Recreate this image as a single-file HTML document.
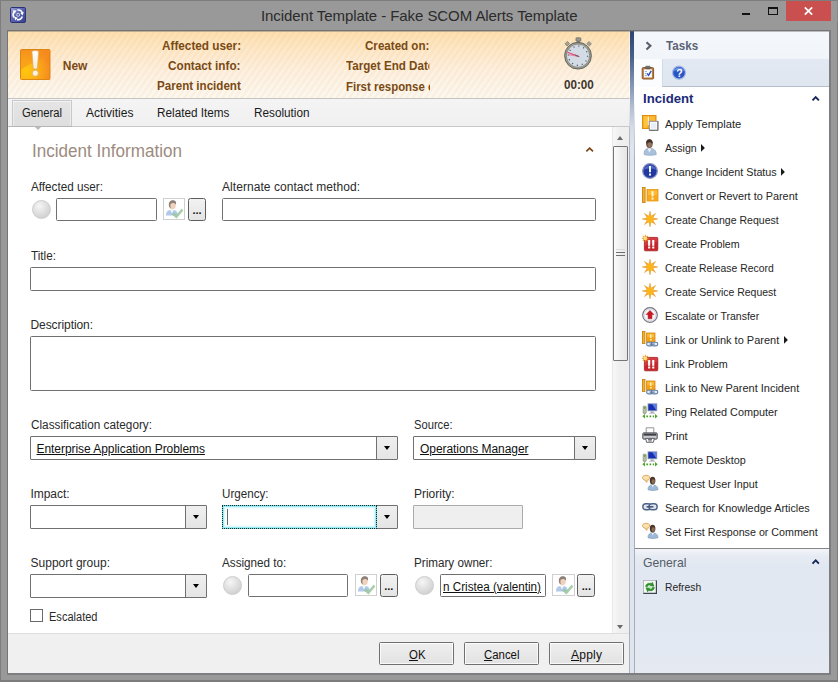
<!DOCTYPE html>
<html><head><meta charset="utf-8"><title>Incident Template - Fake SCOM Alerts Template</title>
<style>
html,body{margin:0;padding:0}
body{width:838px;height:682px;overflow:hidden;position:relative;background:#999;font-family:"Liberation Sans",sans-serif;font-size:12px;color:#1a1a1a}
.a{position:absolute;box-sizing:border-box}
.t{position:absolute;white-space:pre;display:block;transform-origin:0 0}
.clipR{overflow:hidden;width:83.4px}
.inp{position:absolute;box-sizing:border-box;background:#fff;border:1px solid #707070;border-radius:1.5px}
.btn{position:absolute;box-sizing:border-box;border:1px solid #9a9a9a;border-radius:2px;background:linear-gradient(#f6f6f6,#e6e6e6)}
.cb{position:absolute;box-sizing:border-box;background:#fff;border:1px solid #707070;border-radius:1px}
.cbb{position:absolute;box-sizing:border-box;top:0;right:0;bottom:0;width:21px;border-left:1px solid #707070;background:linear-gradient(#efefef,#e5e5e5)}
.cbb:after{content:"";position:absolute;left:7px;top:9px;border-left:3.5px solid transparent;border-right:3.5px solid transparent;border-top:4px solid #000}
.orb{position:absolute;width:19px;height:19px;border-radius:50%;box-sizing:border-box;border:1px solid #cdcdcd;background:radial-gradient(circle at 38% 30%,#f6f6f6 0,#e2e2e2 40%,#d2d2d2 75%,#c8c8c8 100%)}
.ub{background:#fff !important;border-color:#d0d0d0 !important;border-radius:0 !important}
.db{border-color:#5e5e5e !important;border-radius:2.5px !important;background:linear-gradient(#f2f2f2,#e4e4e4) !important}
svg{position:absolute;overflow:visible}
</style></head>
<body>
<!-- window frame -->
<div class="a" style="left:0;top:0;width:838px;height:682px;border:1px solid #7d7d7d;border-bottom-color:#8a8a8a;border-right-color:#8a8a8a"></div>
<div class="a" style="left:7px;top:30px;width:824px;height:645px;border:1px solid #747474"></div>
<!-- title bar icon -->
<svg style="left:10px;top:7px" width="16" height="16" viewBox="0 0 16 16"><defs><linearGradient id="ag" x1="0" y1="0" x2="1" y2="1"><stop offset="0" stop-color="#9aa3d6"/><stop offset=".5" stop-color="#5660ae"/><stop offset="1" stop-color="#363f90"/></linearGradient></defs><rect x=".5" y=".5" width="15" height="15" rx="1.2" fill="url(#ag)" stroke="#2a3176"/><path d="M4.2 10.6 A4.6 4.6 0 0 1 4.6 4.6" stroke="#fff" stroke-width="1.6" fill="none"/><path d="M2.6 3.2 L6.6 3.4 L4.6 6.6Z" fill="#fff"/><path d="M7.4 3.1 A4.6 4.6 0 0 1 12.4 6" stroke="#fff" stroke-width="1.5" fill="none"/><path d="M13.8 5 L12.6 8.6 L10.4 6Z" fill="#fff"/><path d="M12.3 9.6 A4.6 4.6 0 0 1 7 12.6" stroke="#fff" stroke-width="1.6" fill="none"/><path d="M4 9.6 L7.8 10.8 L5.4 13.6Z" fill="#fff"/><circle cx="8.2" cy="7.8" r="1.5" fill="none" stroke="#dfe3f6" stroke-width=".9"/></svg>
<!-- caption buttons -->
<div class="a" style="left:742px;top:13px;width:8px;height:2px;background:#111"></div>
<div class="a" style="left:768px;top:7px;width:10px;height:8px;border:1px solid #111;border-top-width:2px"></div>
<div class="a" style="left:786px;top:1px;width:45px;height:20px;background:#ca4f4f"></div>
<svg style="left:804px;top:7px" width="9" height="8" viewBox="0 0 9 8"><path d="M0.8 0.3 L8.2 7.7 M8.2 0.3 L0.8 7.7" stroke="#fff" stroke-width="1.7" fill="none"/></svg>

<!-- LEFT PANE -->
<div class="a" id="hdr" style="left:8px;top:31px;width:622px;height:67px;background:repeating-linear-gradient(125deg,rgba(232,150,60,.075) 0,rgba(232,150,60,.075) 1.5px,rgba(232,150,60,0) 2.7px,rgba(232,150,60,0) 4px,rgba(232,150,60,.075) 5.2px),linear-gradient(#fde0b0 0,#fde6c2 20%,#fdeedb 50%,#fcf4e8 75%,#fcf8f0 100%)"></div>
<!-- warning icon -->
<svg style="left:20px;top:49px" width="31" height="31" viewBox="0 0 31 31"><defs><radialGradient id="wg" cx="0.18" cy="0.72" r="0.95"><stop offset="0" stop-color="#ffc70d"/><stop offset=".35" stop-color="#fdb515"/><stop offset=".7" stop-color="#f8981c"/><stop offset="1" stop-color="#f4801f"/></radialGradient><linearGradient id="we" x1="0" y1="0" x2="0" y2="1"><stop offset="0" stop-color="#ffffff"/><stop offset="1" stop-color="#f6ead2"/></linearGradient></defs><rect x=".5" y=".5" width="29.5" height="30" rx="1" fill="url(#wg)" stroke="#dd8614"/><path d="M1 1 H29.5 V8 C20 10 8 15 1 21Z" fill="#f6901e" opacity=".55"/><path d="M11.9 2.2 Q15.3 0.9 18.7 2.2 L17.4 19.6 Q15.3 20.5 13.2 19.6Z" fill="url(#we)" stroke="#e0a95a" stroke-width=".7"/><circle cx="15.3" cy="24.2" r="3" fill="#fbf3e2" stroke="#e0a95a" stroke-width=".7"/></svg>
<!-- stopwatch -->
<svg style="left:562px;top:36px" width="32" height="36" viewBox="0 0 32 36"><rect x="14" y="1.8" width="4.8" height="3.4" rx=".6" fill="#9a9a92" stroke="#66665e" stroke-width=".7"/><rect x="15.2" y="4.8" width="2.4" height="2.4" fill="#7a7a72"/><rect x="3.6" y="6.2" width="3.4" height="3" transform="rotate(-42 5.3 7.7)" fill="#a5a59b" stroke="#6e6e66" stroke-width=".6"/><rect x="25.4" y="6.2" width="3.4" height="3" transform="rotate(42 27.1 7.7)" fill="#a5a59b" stroke="#6e6e66" stroke-width=".6"/><circle cx="16" cy="19.7" r="13.4" fill="#9c9c90" stroke="#5e5e58" stroke-width=".9"/><circle cx="16" cy="19.7" r="11.6" fill="#d3dce5" stroke="#74746c" stroke-width=".7"/><circle cx="16" cy="19.7" r="9.6" fill="none" stroke="#4e5660" stroke-width="1.3" stroke-dasharray="1.1 3.927"/><path d="M16.4 20.4 L5.4 16.2" stroke="#e04a72" stroke-width="1.2"/><path d="M16.4 20.4 L6.2 18.6" stroke="#e87a98" stroke-width="1"/><path d="M13 19 L17.4 20.8" stroke="#6a5860" stroke-width="1"/></svg>

<!-- tab strip -->
<div class="a" style="left:8px;top:98px;width:622px;height:29px;background:linear-gradient(#f4f4f4,#f0f0f0);border-top:1px solid #c4c4c4;border-bottom:1px solid #c8c8c8"></div>
<div class="a" style="left:12px;top:100px;width:60px;height:27px;background:linear-gradient(#e5e5e5,#dedede);border:1px solid #c8c8c8;border-bottom-color:#b4b4b4;box-shadow:inset 0 1px 0 rgba(255,255,255,.55),inset 1px 0 0 rgba(255,255,255,.4),inset -1px 0 0 rgba(255,255,255,.4)"></div>
<div class="a" style="left:9px;top:126px;width:63px;height:1px;background:#b6b6b6"></div>

<!-- form area -->
<div class="a" style="left:8px;top:127px;width:604px;height:508px;background:#fff"></div>
<div class="a" style="left:35px;top:127px;width:0;height:0;border-left:3.5px solid transparent;border-right:3.5px solid transparent;border-top:3.5px solid #b8b8b8"></div>
<!-- expander chevron -->
<svg style="left:584px;top:146px" width="10" height="7" viewBox="0 0 10 7"><path d="M2.33 5.38 L5.65 2.06 L8.97 5.38" stroke="#7a4210" stroke-width="1.6" fill="none"/></svg>

<!-- row 1 -->
<div class="orb" style="left:32px;top:200px"></div>
<div class="inp" style="left:56px;top:198px;width:101px;height:23px"></div>
<div class="btn ub" style="left:163px;top:198px;width:22px;height:22px"></div>
<div class="btn db" style="left:188px;top:198px;width:18px;height:23px"></div>
<div class="inp" style="left:222px;top:198px;width:374px;height:23px"></div>
<!-- title -->
<div class="inp" style="left:30px;top:267px;width:566px;height:24px"></div>
<!-- description -->
<div class="inp" style="left:30px;top:336px;width:566px;height:55px"></div>
<!-- class / source -->
<div class="cb" style="left:30px;top:436px;width:368px;height:24px"><div class="cbb"></div></div>
<div class="cb" style="left:413px;top:436px;width:183px;height:24px"><div class="cbb"></div></div>
<!-- impact / urgency / priority -->
<div class="cb" style="left:30px;top:505px;width:177px;height:24px"><div class="cbb"></div></div>
<div class="cb" style="left:222px;top:505px;width:176px;height:24px"><div class="cbb"></div></div>
<div class="a" style="left:222px;top:505px;width:155px;height:24px;border:1px solid #6ccfdc;box-shadow:inset 0 0 0 1px #9aedf5, inset 0 0 2px 2px #cdf6fa;background:#fff"></div>
<div class="a" style="left:222px;top:505px;width:155px;height:24px;border:1px dotted #132c2c"></div>
<div class="a" style="left:227px;top:509px;width:1.4px;height:16px;background:#666"></div>
<div class="a" style="left:413px;top:505px;width:110px;height:24px;border:1px solid #ababab;background:#efefef;border-radius:1px"></div>
<!-- support / assigned / owner -->
<div class="cb" style="left:30px;top:574px;width:177px;height:24px"><div class="cbb"></div></div>
<div class="orb" style="left:223px;top:576px"></div>
<div class="inp" style="left:248px;top:574px;width:100px;height:23px"></div>
<div class="btn ub" style="left:355px;top:574px;width:22px;height:22px"></div>
<div class="btn db" style="left:380px;top:574px;width:18px;height:23px"></div>
<div class="orb" style="left:415px;top:576px"></div>
<div class="inp" style="left:440px;top:574px;width:106px;height:23px"></div>
<div class="btn ub" style="left:552px;top:574px;width:23px;height:22px"></div>
<div class="btn db" style="left:577px;top:574px;width:18px;height:23px"></div>
<!-- checkbox -->
<div class="inp" style="left:30px;top:609px;width:13px;height:13px;border-color:#6a6a6a;border-radius:0"></div>

<!-- scrollbar -->
<div class="a" style="left:612px;top:127px;width:17px;height:507px;background:linear-gradient(90deg,#f7f7f7,#efefef 40%,#eeeeee);border-left:1px solid #e8e8e8"></div>
<div class="a" style="left:613px;top:146px;width:15px;height:215px;background:linear-gradient(90deg,#fbfbfb,#ededed 60%,#e6e6e6);border:1px solid #767676;border-radius:1px"></div>
<div class="a" style="left:616px;top:249px;width:9px;height:1px;background:#d8d8d8"></div>
<div class="a" style="left:616px;top:252px;width:9px;height:1px;background:#6e6e6e"></div>
<div class="a" style="left:616px;top:255px;width:9px;height:1px;background:#6e6e6e"></div>
<div class="a" style="left:617px;top:136px;width:0;height:0;border-left:3.5px solid transparent;border-right:3.5px solid transparent;border-bottom:4px solid #6a6a6a"></div>
<div class="a" style="left:617px;top:625px;width:0;height:0;border-left:3.5px solid transparent;border-right:3.5px solid transparent;border-top:4px solid #6a6a6a"></div>

<!-- bottom bar -->
<div class="a" style="left:8px;top:633px;width:622px;height:41px;background:#f0f0f0;border-top:1px solid #dedede"></div>
<div class="btn" style="left:379px;top:642px;width:75px;height:23px;border-color:#707070;border-radius:1.5px;background:linear-gradient(#efefef,#e2e2e2);box-shadow:inset 0 0 0 1px rgba(255,255,255,.75)"></div>
<div class="btn" style="left:464px;top:642px;width:75px;height:23px;border-color:#707070;border-radius:1.5px;background:linear-gradient(#efefef,#e2e2e2);box-shadow:inset 0 0 0 1px rgba(255,255,255,.75)"></div>
<div class="btn" style="left:549px;top:642px;width:75px;height:23px;border-color:#707070;border-radius:1.5px;background:linear-gradient(#efefef,#e2e2e2);box-shadow:inset 0 0 0 1px rgba(255,255,255,.75)"></div>

<!-- splitter -->
<div class="a" style="left:629px;top:31px;width:6px;height:643px;background:linear-gradient(rgba(255,255,255,.5) 0,rgba(255,255,255,.5) 10%,#aab1bc 20%,#aab1bc 100%)"></div>
<div class="a" style="left:630px;top:31px;width:4px;height:643px;background:linear-gradient(#2b4474 0,#46608c 4%,#7d90b0 8%,#b4bfd1 12%,#d6dce7 15%,#dfe5ee 18%,#dfe5ee 100%)"></div>
<!-- RIGHT PANE -->
<div class="a" style="left:634px;top:31px;width:196px;height:643px;background:#fff"></div>
<div class="a" style="left:634px;top:31px;width:196px;height:28px;background:linear-gradient(#f4f7fb,#f1f4f9)"></div>
<div class="a" style="left:634px;top:59px;width:28px;height:28px;background:#fbfcfe"></div>
<div class="a" style="left:662px;top:59px;width:168px;height:28px;background:linear-gradient(#e3e9f2,#e0e6ef);border-bottom:1px solid #b6beca;border-left:1px solid #d5dbe5"></div>
<svg style="left:645px;top:40px" width="8" height="11" viewBox="0 0 8 11"><path d="M1.5 2.2 L5.4 5.8 L1.5 9.4" stroke="#585d6a" stroke-width="2.1" fill="none"/></svg>
<!-- section chevrons -->
<svg style="left:810px;top:95px" width="10" height="7" viewBox="0 0 10 7"><path d="M2.5 5.4 L5.7 2.2 L8.9 5.4" stroke="#17265a" stroke-width="1.9" fill="none"/></svg>
<!-- general section -->
<div class="a" style="left:634px;top:548px;width:196px;height:126px;background:linear-gradient(#f3f5f9 0,#e6ebf3 6%,#e2e8f1 14%,#e2e8f1 60%,#e4e9f2 100%);border-top:1px solid #858585"></div>
<svg style="left:810px;top:558px" width="10" height="7" viewBox="0 0 10 7"><path d="M2.5 5.6 L5.7 2.4 L8.9 5.6" stroke="#17265a" stroke-width="1.9" fill="none"/></svg>

<div class="a" style="left:634px;top:31px;width:1px;height:643px;background:linear-gradient(rgba(170,177,188,0) 0,rgba(170,177,188,0) 10%,#a6aeba 20%,#a6aeba 100%)"></div>
<div class="a" style="left:8px;top:31px;width:821px;height:1px;background:rgba(105,105,105,.42)"></div>
<!-- frame overlay -->
<div class="a" style="left:829px;top:22px;width:9px;height:660px;background:#999;border-left:2px solid #7c7e81;border-right:1px solid #7f7f7f"></div>
<div class="a" style="left:0;top:673px;width:838px;height:9px;background:#999;border-top:2px solid #7c7e81;border-bottom:2px solid #7c7c7c;border-left:1px solid #7d7d7d;border-right:1px solid #7f7f7f"></div>
<div class="a" style="left:1px;top:673px;width:6px;height:2px;background:#999"></div>
<div class="a" style="left:831px;top:22px;width:6px;height:9px;background:#999"></div>
<div class="a" style="left:829px;top:22px;width:2px;height:8px;background:#999"></div>
<div class="a" style="left:831px;top:673px;width:6px;height:2px;background:#999"></div>
<svg style="left:642px;top:115px" width="16" height="16" viewBox="0 0 16 16"><rect x="0.5" y="0.5" width="13.5" height="13" fill="#f7a61c" stroke="#e0900c"/><rect x="1.6" y="1.4" width="3.8" height="11.2" fill="#fdc33e"/><rect x="7.4" y="1.4" width="5.6" height="5" fill="#fbb836"/><path d="M6.3 1.6 V10" stroke="#fff4d8" stroke-width="1.3"/><rect x="7.3" y="6.3" width="8.6" height="9" fill="#fafbfd" stroke="#8e9096"/><path d="M7.3 15.3 H15.9 V6.3" stroke="#6e7076" fill="none"/><rect x="9" y="8" width="5.2" height="5.4" fill="#e8eef8"/></svg>
<svg style="left:642px;top:139px" width="16" height="16" viewBox="0 0 16 16"><path d="M2.2 15.6 C1.8 11.6 3.6 9.4 7.4 9 C11.4 9.4 14.6 11.6 14.2 15.6 C10.8 16.6 5.6 16.6 2.2 15.6Z" fill="#a9c2da" stroke="#7e9ab8" stroke-width=".6"/><path d="M5.6 9.4 L7.4 13.4 L9.4 9.4Z" fill="#eef3f9"/><ellipse cx="7.4" cy="4.6" rx="3.3" ry="4.5" fill="#6e5444"/><path d="M4.1 5.2 C3.6 -0.6 11 -0.6 10.7 5 C9.6 2.8 5.4 2.8 4.1 5.2Z" fill="#3e3029"/><ellipse cx="7.8" cy="6.2" rx="2.1" ry="2.7" fill="#94745e"/></svg>
<svg style="left:642px;top:163px" width="16" height="16" viewBox="0 0 16 16"><circle cx="8" cy="8" r="7.3" fill="#2138a0" stroke="#8894c0" stroke-width="1.3"/><path d="M2 6.8 A6.2 6.2 0 0 1 14 6.8 C10 4.8 6 4.8 2 6.8Z" fill="#5c78d6" opacity=".75"/><path d="M8 3 V9.2" stroke="#fff" stroke-width="1.9"/><rect x="7.05" y="10.5" width="1.9" height="2.1" fill="#fff"/></svg>
<svg style="left:642px;top:187px" width="16" height="16" viewBox="0 0 16 16"><rect x="0.5" y="0.5" width="2.6" height="15" fill="#f7b02a" stroke="#c98412" stroke-width=".9"/><rect x="5" y="2.5" width="11" height="11.5" fill="#f7a81c" stroke="#e59a14" stroke-width=".8"/><rect x="6" y="3.5" width="9" height="4.5" fill="#fbbf3a" opacity=".8"/><path d="M10.5 4.2 V9.4" stroke="#fff6e0" stroke-width="2"/><rect x="9.5" y="10.6" width="2" height="2" fill="#fff6e0"/></svg>
<svg style="left:642px;top:211px" width="16" height="16" viewBox="0 0 16 16"><path d="M8.00 0.20 L9.03 5.51 L13.52 2.48 L10.49 6.97 L15.80 8.00 L10.49 9.03 L13.52 13.52 L9.03 10.49 L8.00 15.80 L6.97 10.49 L2.48 13.52 L5.51 9.03 L0.20 8.00 L5.51 6.97 L2.48 2.48 L6.97 5.51Z" fill="#f0a020" stroke="#e2901a" stroke-width=".5" stroke-linejoin="round"/><circle cx="8" cy="8" r="3.7" fill="#fbb41c"/></svg>
<svg style="left:642px;top:235px" width="16" height="16" viewBox="0 0 16 16"><rect x="2.4" y="2.4" width="13.4" height="13.4" rx="1" fill="#c4262c" stroke="#a81e26" stroke-width=".8"/><path d="M3 3 H15.2 V7 C11 7.6 6 9 3 11Z" fill="#dc4a4e" opacity=".6"/><rect x="6.1" y="5" width="2.1" height="5.8" fill="#fff"/><rect x="6.1" y="11.5" width="2.1" height="2" fill="#fff"/><rect x="10.2" y="5" width="2.1" height="5.8" fill="#fff"/><rect x="10.2" y="11.5" width="2.1" height="2" fill="#fff"/><path d="M3.40 -0.20 L3.90 2.20 L5.95 0.85 L4.60 2.90 L7.00 3.40 L4.60 3.90 L5.95 5.95 L3.90 4.60 L3.40 7.00 L2.90 4.60 L0.85 5.95 L2.20 3.90 L-0.20 3.40 L2.20 2.90 L0.85 0.85 L2.90 2.20Z" fill="#f6b23a" stroke="#e2901a" stroke-width=".5" stroke-linejoin="round"/><circle cx="3.4" cy="3.4" r="1.6" fill="#fde27a"/></svg>
<svg style="left:642px;top:259px" width="16" height="16" viewBox="0 0 16 16"><path d="M8.00 0.20 L9.03 5.51 L13.52 2.48 L10.49 6.97 L15.80 8.00 L10.49 9.03 L13.52 13.52 L9.03 10.49 L8.00 15.80 L6.97 10.49 L2.48 13.52 L5.51 9.03 L0.20 8.00 L5.51 6.97 L2.48 2.48 L6.97 5.51Z" fill="#f0a020" stroke="#e2901a" stroke-width=".5" stroke-linejoin="round"/><circle cx="8" cy="8" r="3.7" fill="#fbb41c"/></svg>
<svg style="left:642px;top:283px" width="16" height="16" viewBox="0 0 16 16"><path d="M8.00 0.20 L9.03 5.51 L13.52 2.48 L10.49 6.97 L15.80 8.00 L10.49 9.03 L13.52 13.52 L9.03 10.49 L8.00 15.80 L6.97 10.49 L2.48 13.52 L5.51 9.03 L0.20 8.00 L5.51 6.97 L2.48 2.48 L6.97 5.51Z" fill="#f0a020" stroke="#e2901a" stroke-width=".5" stroke-linejoin="round"/><circle cx="8" cy="8" r="3.7" fill="#fbb41c"/></svg>
<svg style="left:642px;top:307px" width="16" height="16" viewBox="0 0 16 16"><circle cx="8" cy="8" r="7.3" fill="#f6f6f8" stroke="#74747e" stroke-width="1.2"/><circle cx="8" cy="8" r="5.9" fill="none" stroke="#d9dbe4" stroke-width="1"/><path d="M8 3.4 L11.9 7.6 H9.9 V11.8 H6.1 V7.6 H4.1Z" fill="#cc1822" stroke="#a3121a" stroke-width=".5"/></svg>
<svg style="left:642px;top:331px" width="16" height="16" viewBox="0 0 16 16"><rect x="0.5" y="0.5" width="2.4" height="12" fill="#f7b02a" stroke="#c98412" stroke-width=".9"/><rect x="4.5" y="2" width="8.5" height="9" fill="#f2a21a" stroke="#d48c12" stroke-width=".8"/><rect x="5.3" y="2.8" width="7" height="3.4" fill="#fbc040" opacity=".8"/><path d="M8.8 3.4 V7" stroke="#ffe9b8" stroke-width="1.6"/><rect x="8" y="8" width="1.6" height="1.5" fill="#ffe9b8"/><rect x="4.6" y="11.3" width="6.4" height="3.6" rx="1.8" fill="#e8eef6" stroke="#5f7ea8" stroke-width="1.1"/><rect x="9.4" y="11.3" width="6.4" height="3.6" rx="1.8" fill="#e8eef6" stroke="#5f7ea8" stroke-width="1.1"/><path d="M7.6 13.1 H12.8" stroke="#4a6890" stroke-width="1.1"/></svg>
<svg style="left:642px;top:355px" width="16" height="16" viewBox="0 0 16 16"><rect x="2.4" y="2.4" width="13.4" height="13.4" rx="1" fill="#c4262c" stroke="#a81e26" stroke-width=".8"/><path d="M3 3 H15.2 V7 C11 7.6 6 9 3 11Z" fill="#dc4a4e" opacity=".6"/><rect x="6.1" y="5" width="2.1" height="5.8" fill="#fff"/><rect x="6.1" y="11.5" width="2.1" height="2" fill="#fff"/><rect x="10.2" y="5" width="2.1" height="5.8" fill="#fff"/><rect x="10.2" y="11.5" width="2.1" height="2" fill="#fff"/><path d="M3.40 -0.20 L3.90 2.20 L5.95 0.85 L4.60 2.90 L7.00 3.40 L4.60 3.90 L5.95 5.95 L3.90 4.60 L3.40 7.00 L2.90 4.60 L0.85 5.95 L2.20 3.90 L-0.20 3.40 L2.20 2.90 L0.85 0.85 L2.90 2.20Z" fill="#f6b23a" stroke="#e2901a" stroke-width=".5" stroke-linejoin="round"/><circle cx="3.4" cy="3.4" r="1.6" fill="#fde27a"/></svg>
<svg style="left:642px;top:379px" width="16" height="16" viewBox="0 0 16 16"><rect x="0.5" y="0.5" width="2.4" height="12" fill="#f7b02a" stroke="#c98412" stroke-width=".9"/><rect x="4.5" y="2" width="8.5" height="9" fill="#f2a21a" stroke="#d48c12" stroke-width=".8"/><rect x="5.3" y="2.8" width="7" height="3.4" fill="#fbc040" opacity=".8"/><path d="M8.8 3.4 V7" stroke="#ffe9b8" stroke-width="1.6"/><rect x="8" y="8" width="1.6" height="1.5" fill="#ffe9b8"/><rect x="4.6" y="11.3" width="6.4" height="3.6" rx="1.8" fill="#e8eef6" stroke="#5f7ea8" stroke-width="1.1"/><rect x="9.4" y="11.3" width="6.4" height="3.6" rx="1.8" fill="#e8eef6" stroke="#5f7ea8" stroke-width="1.1"/><path d="M7.6 13.1 H12.8" stroke="#4a6890" stroke-width="1.1"/></svg>
<svg style="left:642px;top:403px" width="16" height="16" viewBox="0 0 16 16"><rect x="1.2" y="3.2" width="3" height="7.2" rx=".6" fill="#b9c4a4" stroke="#808a70" stroke-width=".7"/><rect x="2" y="4.1" width="1.4" height="1.6" fill="#5c9a2c"/><rect x="6" y="0.8" width="8.8" height="7" fill="#1730b0" stroke="#8e98b8" stroke-width=".8"/><path d="M10 1 H14.4 V7.6 Z" fill="#6f8ae8" opacity=".85"/><rect x="8.8" y="8.4" width="2.8" height="1.5" fill="#9aa0aa"/><rect x="7.2" y="9.7" width="6" height="1" fill="#b4b8c0"/><path d="M0.3 13.3 L3 11 V15.6Z" fill="#4ca62a"/><path d="M15.7 13.3 L13 11 V15.6Z" fill="#4ca62a"/><path d="M4.3 13.3 H12" stroke="#4ca62a" stroke-width="1.7" stroke-dasharray="1.7 1.5"/></svg>
<svg style="left:642px;top:427px" width="16" height="16" viewBox="0 0 16 16"><path d="M4.2 6 V0.8 H11.8 V6" fill="#fff" stroke="#8a8a8e" stroke-width=".9"/><rect x="0.7" y="5.8" width="14.6" height="6.4" rx="1.2" fill="#8c8e94" stroke="#5c5e64" stroke-width=".9"/><rect x="2" y="6.8" width="12" height="1.6" fill="#3c3e44"/><rect x="1.6" y="9" width="12.8" height="2.2" fill="#c8cace"/><path d="M3.6 11.4 H12.4 L11.4 15.3 H4.6Z" fill="#f8f8f8" stroke="#55575c" stroke-width=".9"/><path d="M6 12.6 H10 M6.4 13.9 H9.6" stroke="#44464c" stroke-width=".8"/></svg>
<svg style="left:642px;top:451px" width="16" height="16" viewBox="0 0 16 16"><rect x="1.2" y="3.2" width="3" height="7.2" rx=".6" fill="#b9c4a4" stroke="#808a70" stroke-width=".7"/><rect x="2" y="4.1" width="1.4" height="1.6" fill="#5c9a2c"/><rect x="6" y="0.8" width="8.8" height="7" fill="#1730b0" stroke="#8e98b8" stroke-width=".8"/><path d="M10 1 H14.4 V7.6 Z" fill="#6f8ae8" opacity=".85"/><rect x="8.8" y="8.4" width="2.8" height="1.5" fill="#9aa0aa"/><rect x="7.2" y="9.7" width="6" height="1" fill="#b4b8c0"/><path d="M0.3 13.3 L3 11 V15.6Z" fill="#4ca62a"/><path d="M15.7 13.3 L13 11 V15.6Z" fill="#4ca62a"/><path d="M4.3 13.3 H12" stroke="#4ca62a" stroke-width="1.7" stroke-dasharray="1.7 1.5"/></svg>
<svg style="left:642px;top:475px" width="16" height="16" viewBox="0 0 16 16"><path d="M1 1.4 C2.6 -0.2 6.6 0 7.6 1.8 C8.4 3.6 6.8 5.2 5 5.2 L4.8 7.4 L3.2 5.2 C1 5 -0.2 2.8 1 1.4Z" fill="#fae0b0" stroke="#d9a04a" stroke-width=".9"/><path d="M6 14.8 C5.8 11.8 7.4 10 10.6 9.8 C13.8 10 16.2 11.8 15.9 14.8 C13 15.7 8.8 15.7 6 14.8Z" fill="#9dbad8" stroke="#7694b4" stroke-width=".6"/><path d="M9.4 10 L10.7 12.6 L12 10Z" fill="#e9f0f8"/><ellipse cx="10.6" cy="5.6" rx="2.8" ry="3.9" fill="#4a382e"/><ellipse cx="11.2" cy="6.6" rx="1.7" ry="2.4" fill="#8e6a52"/></svg>
<svg style="left:642px;top:499px" width="16" height="16" viewBox="0 0 16 16"><rect x="0.8" y="4.8" width="8.2" height="6" rx="3" fill="#dfe5ee" stroke="#4f6488" stroke-width="1.4"/><rect x="7" y="4.8" width="8.2" height="6" rx="3" fill="#dfe5ee" stroke="#4f6488" stroke-width="1.4"/><path d="M4.6 7.8 H11.4" stroke="#3c5074" stroke-width="1.5"/></svg>
<svg style="left:642px;top:523px" width="16" height="16" viewBox="0 0 16 16"><path d="M1 1.4 C2.6 -0.2 6.6 0 7.6 1.8 C8.4 3.6 6.8 5.2 5 5.2 L4.8 7.4 L3.2 5.2 C1 5 -0.2 2.8 1 1.4Z" fill="#fae0b0" stroke="#d9a04a" stroke-width=".9"/><path d="M6 14.8 C5.8 11.8 7.4 10 10.6 9.8 C13.8 10 16.2 11.8 15.9 14.8 C13 15.7 8.8 15.7 6 14.8Z" fill="#9dbad8" stroke="#7694b4" stroke-width=".6"/><path d="M9.4 10 L10.7 12.6 L12 10Z" fill="#e9f0f8"/><ellipse cx="10.6" cy="5.6" rx="2.8" ry="3.9" fill="#4a382e"/><ellipse cx="11.2" cy="6.6" rx="1.7" ry="2.4" fill="#8e6a52"/></svg>
<svg style="left:643px;top:580px" width="14" height="14" viewBox="0 0 14 14"><rect x="0.5" y="0.5" width="13" height="13" fill="#f3fbf1" stroke="#b6bac2"/><path d="M0.4 13.4 H13.4 V0.4" stroke="#3e4450" stroke-width="1.2" fill="none"/><path d="M2.6 6.6 C2.8 3.8 5.8 2.6 8.4 3.6 L9.4 2.2 L11 6.2 L6.8 5.8 L7.7 4.8 C6.2 4.4 4.8 5.2 4.6 6.6Z" fill="#2f9a2f" stroke="#176a1a" stroke-width=".5"/><path d="M11.4 7.4 C11.2 10.2 8.2 11.4 5.6 10.4 L4.6 11.8 L3 7.8 L7.2 8.2 L6.3 9.2 C7.8 9.6 9.2 8.8 9.4 7.4Z" fill="#2f9a2f" stroke="#176a1a" stroke-width=".5"/><circle cx="7" cy="7" r="1.6" fill="#b6e6b0" opacity=".8"/></svg>
<svg style="left:163px;top:198px" width="22" height="22" viewBox="0 0 22 22"><path d="M3 17.6 C2.8 13.6 5 12 9 11.8 C13 12 14.8 13.6 14.6 17.6Z" fill="#a9c3e6" opacity=".9"/><path d="M7.2 12 L9 15.4 L10.8 12Z" fill="#f2f6fb"/><ellipse cx="9.6" cy="7" rx="3.3" ry="4.2" fill="#f0d2bc"/><path d="M6 8 C5 3.4 8.6 1.6 11.4 2.6 C13.4 3.4 13.4 5.6 12.8 6.6 C11.6 4.8 9 4.6 7.6 6 C7.2 7.4 7.4 9.4 8 10.4 C6.8 10 6.2 9 6 8Z" fill="#8c8078"/><path d="M9.4 16.4 L11 14.8 L13.4 17.2 L18.6 11 L20 12.4 L13.4 20.2Z" fill="#9ccb9e" stroke="#84b688" stroke-width=".5" opacity=".88"/></svg>
<svg style="left:355px;top:574px" width="22" height="22" viewBox="0 0 22 22"><path d="M3 17.6 C2.8 13.6 5 12 9 11.8 C13 12 14.8 13.6 14.6 17.6Z" fill="#a9c3e6" opacity=".9"/><path d="M7.2 12 L9 15.4 L10.8 12Z" fill="#f2f6fb"/><ellipse cx="9.6" cy="7" rx="3.3" ry="4.2" fill="#f0d2bc"/><path d="M6 8 C5 3.4 8.6 1.6 11.4 2.6 C13.4 3.4 13.4 5.6 12.8 6.6 C11.6 4.8 9 4.6 7.6 6 C7.2 7.4 7.4 9.4 8 10.4 C6.8 10 6.2 9 6 8Z" fill="#8c8078"/><path d="M9.4 16.4 L11 14.8 L13.4 17.2 L18.6 11 L20 12.4 L13.4 20.2Z" fill="#9ccb9e" stroke="#84b688" stroke-width=".5" opacity=".88"/></svg>
<svg style="left:552.5px;top:574px" width="22" height="22" viewBox="0 0 22 22"><path d="M3 17.6 C2.8 13.6 5 12 9 11.8 C13 12 14.8 13.6 14.6 17.6Z" fill="#a9c3e6" opacity=".9"/><path d="M7.2 12 L9 15.4 L10.8 12Z" fill="#f2f6fb"/><ellipse cx="9.6" cy="7" rx="3.3" ry="4.2" fill="#f0d2bc"/><path d="M6 8 C5 3.4 8.6 1.6 11.4 2.6 C13.4 3.4 13.4 5.6 12.8 6.6 C11.6 4.8 9 4.6 7.6 6 C7.2 7.4 7.4 9.4 8 10.4 C6.8 10 6.2 9 6 8Z" fill="#8c8078"/><path d="M9.4 16.4 L11 14.8 L13.4 17.2 L18.6 11 L20 12.4 L13.4 20.2Z" fill="#9ccb9e" stroke="#84b688" stroke-width=".5" opacity=".88"/></svg>
<svg style="left:641px;top:65px" width="16" height="16" viewBox="0 0 16 16"><rect x="1.2" y="2.6" width="11.4" height="11.4" rx="1" fill="#b97c46" stroke="#8e5828" stroke-width="1"/><rect x="2.9" y="4.3" width="8" height="8.2" fill="#fbfcfd"/><rect x="4.6" y="1.2" width="4.6" height="2.6" rx=".8" fill="#6e6e6e" stroke="#4a4a4a" stroke-width=".6"/><path d="M3.8 6.6 H6 M3.8 8.6 H5.4 M3.8 10.6 H6.2" stroke="#8fa4c4" stroke-width=".9"/><path d="M6 8.4 L7.6 10.2 L10.2 5.8" stroke="#2a50c0" stroke-width="1.4" fill="none"/></svg>
<svg style="left:671px;top:65px" width="16" height="16" viewBox="0 0 16 16"><circle cx="8" cy="7.7" r="6.5" fill="#2a54c4" stroke="#a4bae8" stroke-width="1.3"/><path d="M2.8 6.2 A5.5 5.5 0 0 1 13.2 6.2 C10 4.4 6 4.4 2.8 6.2Z" fill="#7fa2f0" opacity=".8"/></svg>
<svg style="left:701px;top:144.29999999999998px" width="4" height="8" viewBox="0 0 4 8"><path d="M0 0 L3.9 3.9 L0 7.8Z" fill="#1a1a1a"/></svg>
<svg style="left:780.7px;top:167.6px" width="4" height="8" viewBox="0 0 4 8"><path d="M0 0 L3.9 3.9 L0 7.8Z" fill="#1a1a1a"/></svg>
<svg style="left:783.5px;top:335.6px" width="4" height="8" viewBox="0 0 4 8"><path d="M0 0 L3.9 3.9 L0 7.8Z" fill="#1a1a1a"/></svg>
<span class="t " style="left:261.00px;top:6.10px;font-size:15px;line-height:20px;color:#2b2b2b;letter-spacing:-0.070px;">Incident Template - Fake SCOM Alerts Template</span>
<span class="t " style="left:62.80px;top:57.64px;font-size:12px;line-height:16px;color:#7a4a14;letter-spacing:-0.044px;font-weight:700;">New</span>
<span class="t " style="left:161.70px;top:37.64px;font-size:12px;line-height:16px;color:#7a4a14;transform:scaleX(0.9803);font-weight:700;">Affected user:</span>
<span class="t " style="left:168.30px;top:57.64px;font-size:12px;line-height:16px;color:#7a4a14;transform:scaleX(0.9797);font-weight:700;">Contact info:</span>
<span class="t " style="left:157.20px;top:77.64px;font-size:12px;line-height:16px;color:#7a4a14;transform:scaleX(0.9667);font-weight:700;">Parent incident</span>
<span class="t " style="left:365.00px;top:37.64px;font-size:12px;line-height:16px;color:#7a4a14;transform:scaleX(0.9657);font-weight:700;">Created on:</span>
<span class="t clipR" style="left:346.30px;top:57.64px;font-size:12px;line-height:16px;color:#7a4a14;transform:scaleX(0.9690);width:85.86px;font-weight:700;">Target End Date</span>
<span class="t clipR" style="left:346.00px;top:79.14px;font-size:12px;line-height:16px;color:#7a4a14;transform:scaleX(0.9533);width:87.59px;font-weight:700;">First response o</span>
<span class="t " style="left:564.40px;top:76.84px;font-size:12px;line-height:16px;color:#3d362e;transform:scaleX(0.9706);font-weight:700;">00:00</span>
<span class="t " style="left:21.50px;top:104.64px;font-size:12px;line-height:16px;color:#1a1a1a;transform:scaleX(0.9367);">General</span>
<span class="t " style="left:86.00px;top:104.64px;font-size:12px;line-height:16px;color:#1a1a1a;letter-spacing:0.017px;">Activities</span>
<span class="t " style="left:157.00px;top:104.64px;font-size:12px;line-height:16px;color:#1a1a1a;transform:scaleX(0.9791);">Related Items</span>
<span class="t " style="left:253.50px;top:104.64px;font-size:12px;line-height:16px;color:#1a1a1a;transform:scaleX(0.9788);">Resolution</span>
<span class="t " style="left:32.00px;top:139.74px;font-size:17.5px;line-height:23px;color:#9c8b80;transform:scaleX(0.9759);">Incident Information</span>
<span class="t " style="left:30.50px;top:179.14px;font-size:12px;line-height:16px;color:#2a2a2a;transform:scaleX(0.9752);">Affected user:</span>
<span class="t " style="left:222.00px;top:179.14px;font-size:12px;line-height:16px;color:#2a2a2a;letter-spacing:0.052px;">Alternate contact method:</span>
<span class="t " style="left:30.50px;top:248.14px;font-size:12px;line-height:16px;color:#2a2a2a;transform:scaleX(0.9780);">Title:</span>
<span class="t " style="left:30.50px;top:317.14px;font-size:12px;line-height:16px;color:#2a2a2a;letter-spacing:-0.078px;">Description:</span>
<span class="t " style="left:30.50px;top:417.14px;font-size:12px;line-height:16px;color:#2a2a2a;transform:scaleX(0.9806);">Classification category:</span>
<span class="t " style="left:414.00px;top:417.14px;font-size:12px;line-height:16px;color:#2a2a2a;transform:scaleX(0.9309);">Source:</span>
<span class="t " style="left:36.50px;top:441.14px;font-size:12px;line-height:16px;color:#111;letter-spacing:-0.053px;text-decoration:underline;">Enterprise Application Problems</span>
<span class="t " style="left:420.00px;top:441.14px;font-size:12px;line-height:16px;color:#111;letter-spacing:-0.053px;text-decoration:underline;">Operations Manager</span>
<span class="t " style="left:30.50px;top:486.14px;font-size:12px;line-height:16px;color:#2a2a2a;letter-spacing:-0.060px;">Impact:</span>
<span class="t " style="left:222.00px;top:486.14px;font-size:12px;line-height:16px;color:#2a2a2a;transform:scaleX(0.9681);">Urgency:</span>
<span class="t " style="left:414.00px;top:486.14px;font-size:12px;line-height:16px;color:#2a2a2a;letter-spacing:-0.021px;">Priority:</span>
<span class="t " style="left:30.50px;top:555.14px;font-size:12px;line-height:16px;color:#2a2a2a;letter-spacing:0.008px;">Support group:</span>
<span class="t " style="left:222.30px;top:555.14px;font-size:12px;line-height:16px;color:#2a2a2a;transform:scaleX(0.9736);">Assigned to:</span>
<span class="t " style="left:414.00px;top:555.14px;font-size:12px;line-height:16px;color:#2a2a2a;transform:scaleX(0.9729);">Primary owner:</span>
<span class="t " style="left:443.00px;top:579.14px;font-size:12px;line-height:16px;color:#111;transform:scaleX(0.9730);text-decoration:underline;">n Cristea (valentin)</span>
<span class="t " style="left:48.50px;top:609.14px;font-size:12px;line-height:16px;color:#2a2a2a;transform:scaleX(0.9202);">Escalated</span>
<span class="t " style="left:408.50px;top:646.64px;font-size:12px;line-height:16px;color:#111;transform:scaleX(0.9514);"><u>O</u>K</span>
<span class="t " style="left:484.00px;top:646.64px;font-size:12px;line-height:16px;color:#111;transform:scaleX(0.9502);"><u>C</u>ancel</span>
<span class="t " style="left:571.00px;top:646.64px;font-size:12px;line-height:16px;color:#111;letter-spacing:0.242px;"><u>A</u>pply</span>
<span class="t " style="left:666.30px;top:36.52px;font-size:13.5px;line-height:18px;color:#5a6274;transform:scaleX(0.8610);font-weight:700;">Tasks</span>
<span class="t " style="left:643.00px;top:90.32px;font-size:13.5px;line-height:18px;color:#1c2a78;transform:scaleX(0.9756);font-weight:700;">Incident</span>
<span class="t " style="left:665.30px;top:116.02px;font-size:11.5px;line-height:16px;color:#262626;transform:scaleX(0.9717);">Apply Template</span>
<span class="t " style="left:665.30px;top:140.02px;font-size:11.5px;line-height:16px;color:#262626;transform:scaleX(0.9180);">Assign</span>
<span class="t " style="left:665.30px;top:164.02px;font-size:11.5px;line-height:16px;color:#262626;transform:scaleX(0.9342);">Change Incident Status</span>
<span class="t " style="left:665.30px;top:188.02px;font-size:11.5px;line-height:16px;color:#262626;transform:scaleX(0.9436);">Convert or Revert to Parent</span>
<span class="t " style="left:665.30px;top:212.02px;font-size:11.5px;line-height:16px;color:#262626;transform:scaleX(0.9167);">Create Change Request</span>
<span class="t " style="left:665.30px;top:236.02px;font-size:11.5px;line-height:16px;color:#262626;transform:scaleX(0.9274);">Create Problem</span>
<span class="t " style="left:665.30px;top:260.02px;font-size:11.5px;line-height:16px;color:#262626;transform:scaleX(0.9045);">Create Release Record</span>
<span class="t " style="left:665.30px;top:284.02px;font-size:11.5px;line-height:16px;color:#262626;transform:scaleX(0.9108);">Create Service Request</span>
<span class="t " style="left:665.30px;top:308.02px;font-size:11.5px;line-height:16px;color:#262626;transform:scaleX(0.9154);">Escalate or Transfer</span>
<span class="t " style="left:665.30px;top:332.02px;font-size:11.5px;line-height:16px;color:#262626;transform:scaleX(0.9553);">Link or Unlink to Parent</span>
<span class="t " style="left:665.30px;top:356.02px;font-size:11.5px;line-height:16px;color:#262626;transform:scaleX(0.9341);">Link Problem</span>
<span class="t " style="left:665.30px;top:380.02px;font-size:11.5px;line-height:16px;color:#262626;transform:scaleX(0.9542);">Link to New Parent Incident</span>
<span class="t " style="left:665.30px;top:404.02px;font-size:11.5px;line-height:16px;color:#262626;transform:scaleX(0.9427);">Ping Related Computer</span>
<span class="t " style="left:665.30px;top:428.02px;font-size:11.5px;line-height:16px;color:#262626;transform:scaleX(0.9596);">Print</span>
<span class="t " style="left:665.30px;top:452.02px;font-size:11.5px;line-height:16px;color:#262626;transform:scaleX(0.9421);">Remote Desktop</span>
<span class="t " style="left:665.30px;top:476.02px;font-size:11.5px;line-height:16px;color:#262626;transform:scaleX(0.9355);">Request User Input</span>
<span class="t " style="left:665.30px;top:500.02px;font-size:11.5px;line-height:16px;color:#262626;transform:scaleX(0.9432);">Search for Knowledge Articles</span>
<span class="t " style="left:665.30px;top:524.02px;font-size:11.5px;line-height:16px;color:#262626;transform:scaleX(0.9296);">Set First Response or Comment</span>
<span class="t " style="left:643.40px;top:553.50px;font-size:13px;line-height:18px;color:#555c66;transform:scaleX(0.9384);">General</span>
<span class="t " style="left:665.30px;top:579.02px;font-size:11.5px;line-height:16px;color:#262626;transform:scaleX(0.8987);">Refresh</span>
<span class="t " style="left:192.50px;top:202.99px;font-size:11px;line-height:15px;color:#111;letter-spacing:0.000px;font-weight:700;">...</span>
<span class="t " style="left:384.20px;top:579.49px;font-size:11px;line-height:15px;color:#111;letter-spacing:0.000px;font-weight:700;">...</span>
<span class="t " style="left:581.80px;top:579.49px;font-size:11px;line-height:15px;color:#111;letter-spacing:0.000px;font-weight:700;">...</span>
<span class="t " style="left:676.20px;top:66.46px;font-size:10.5px;line-height:15px;color:#fff;letter-spacing:0.000px;font-weight:700;">?</span>
</body></html>
